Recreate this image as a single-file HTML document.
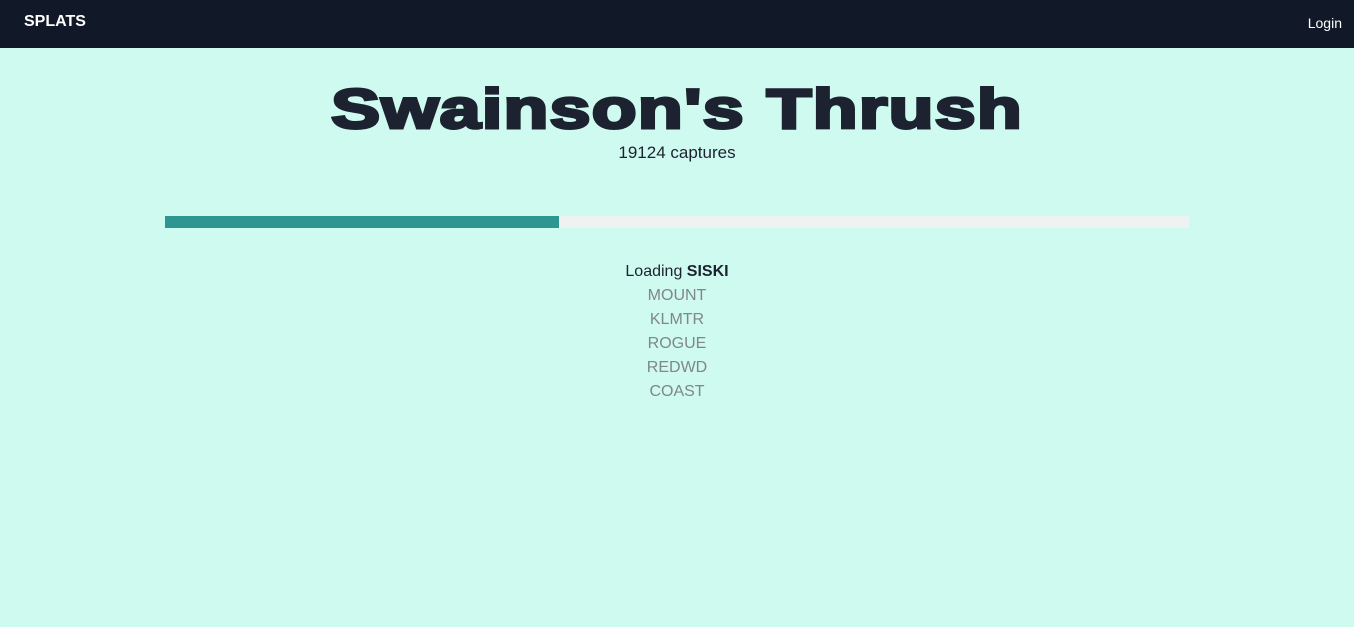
<!DOCTYPE html>
<html><head><meta charset="utf-8"><style>
*{margin:0;padding:0;box-sizing:border-box}
body{width:1354px;height:627px;background:#cffaef;font-family:"Liberation Sans",sans-serif;overflow:hidden;position:relative}
.nav{height:48px;background:#111827;color:#fff;position:relative}
.brand{position:absolute;left:24px;top:13px;font-weight:bold;font-size:16px}
.login{position:absolute;right:12px;top:15px;font-size:14px}
.title{position:absolute;left:0;width:1354px;top:76px;text-align:center;white-space:nowrap;line-height:66px}
.title span{display:inline-block;font-weight:bold;font-size:56px;color:#1c2230;-webkit-text-stroke:3px #1c2230;transform:scaleX(1.31);letter-spacing:1px}
.caps{position:absolute;top:143px;width:1354px;text-align:center;font-size:17px;color:#1c2230}
.bar{position:absolute;left:165px;top:216px;width:1024px;height:12px;background:#eef3f2}
.bar div{width:394px;height:12px;background:#2e9690}
.list{position:absolute;top:260px;width:1354px;text-align:center;font-size:16px;line-height:24px;color:#808785}
.list .cur{color:#1c2230}
</style></head><body>
<div class="nav"><div class="brand">SPLATS</div><div class="login">Login</div></div>
<div class="title"><span>Swainson's Thrush</span></div>
<div class="caps">19124 captures</div>
<div class="bar"><div></div></div>
<div class="list">
<div class="cur">Loading <b>SISKI</b></div>
<div>MOUNT</div><div>KLMTR</div><div>ROGUE</div><div>REDWD</div><div>COAST</div>
</div>
</body></html>
